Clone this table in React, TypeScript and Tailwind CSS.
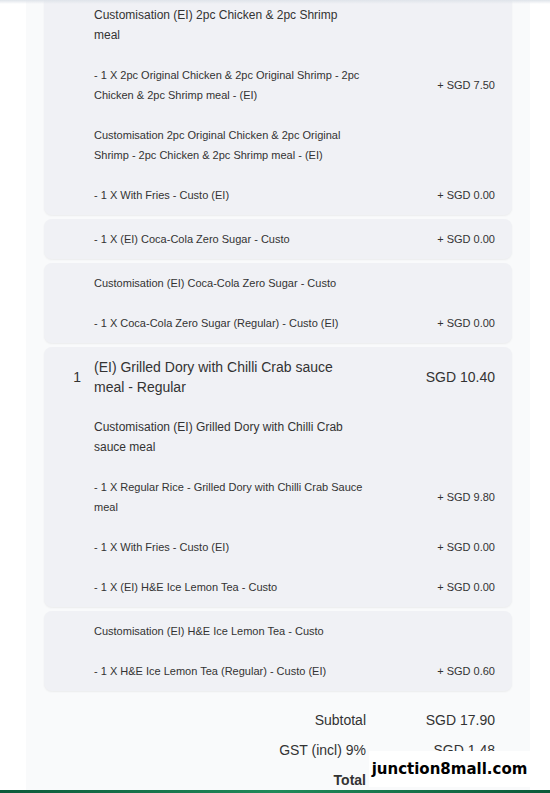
import React from "react";

type Row = { qty?: string; name: string; price?: string; title?: boolean; big?: boolean };

const cards: Row[][] = [
  [
    { name: "Customisation (EI) 2pc Chicken & 2pc Shrimp meal", big: true },
    { name: "- 1 X 2pc Original Chicken & 2pc Original Shrimp - 2pc Chicken & 2pc Shrimp meal - (EI)", price: "+ SGD 7.50" },
    { name: "Customisation 2pc Original Chicken & 2pc Original Shrimp - 2pc Chicken & 2pc Shrimp meal - (EI)" },
    { name: "- 1 X With Fries - Custo (EI)", price: "+ SGD 0.00" },
  ],
  [{ name: "- 1 X (EI) Coca-Cola Zero Sugar - Custo", price: "+ SGD 0.00" }],
  [
    { name: "Customisation (EI) Coca-Cola Zero Sugar - Custo" },
    { name: "- 1 X Coca-Cola Zero Sugar (Regular) - Custo (EI)", price: "+ SGD 0.00" },
  ],
  [
    { qty: "1", name: "(EI) Grilled Dory with Chilli Crab sauce meal - Regular", price: "SGD 10.40", title: true },
    { name: "Customisation (EI) Grilled Dory with Chilli Crab sauce meal", big: true },
    { name: "- 1 X Regular Rice - Grilled Dory with Chilli Crab Sauce meal", price: "+ SGD 9.80" },
    { name: "- 1 X With Fries - Custo (EI)", price: "+ SGD 0.00" },
    { name: "- 1 X (EI) H&E Ice Lemon Tea - Custo", price: "+ SGD 0.00" },
  ],
  [
    { name: "Customisation (EI) H&E Ice Lemon Tea - Custo" },
    { name: "- 1 X H&E Ice Lemon Tea (Regular) - Custo (EI)", price: "+ SGD 0.60" },
  ],
];

function ItemRow({ r }: { r: Row }) {
  const nameSize = r.title ? "text-[14px]" : r.big ? "text-[12px]" : "text-[11px]";
  const priceSize = r.title ? "text-[14px]" : "text-[11px]";
  return (
    <div className="flex items-center">
      <div className="w-[50px] shrink-0 pr-[13px] text-right text-[14px] leading-5 text-[#333]">{r.qty ?? ""}</div>
      <div className={`w-[270px] shrink-0 leading-5 text-[#333] ${nameSize}`}>{r.name}</div>
      <div className={`flex-1 text-right leading-5 text-[#333] ${priceSize}`}>{r.price ?? ""}</div>
    </div>
  );
}

export default function App() {
  return (
    <div
      className="relative h-[793px] w-[550px] overflow-hidden bg-white"
      style={{ fontFamily: '"Liberation Sans", Arial, sans-serif' }}
    >
      <div className="ml-[26px] h-full w-[504px] bg-[#f9fafb] px-[18px]">
        <div className="flex flex-col gap-1">
          {cards.map((rows, i) => (
            <div
              key={i}
              className={`flex flex-col gap-5 rounded-lg bg-[#f0f1f5] py-[10px] pr-[17px] shadow-[0_1px_2px_rgba(0,0,0,0.06)] ${i === 0 ? "-mt-[5px]" : ""}`}
            >
              {rows.map((r, j) => (
                <ItemRow key={j} r={r} />
              ))}
            </div>
          ))}
        </div>
        <div className="mt-[14px] flex flex-col pr-[17px] text-[14px] text-[#333]">
          <div className="flex h-[30px] items-center justify-end">
            <span>Subtotal</span>
            <span className="w-[129px] text-right">SGD 17.90</span>
          </div>
          <div className="flex h-[30px] items-center justify-end">
            <span>GST (incl) 9%</span>
            <span className="w-[129px] text-right">SGD 1.48</span>
          </div>
          <div className="flex h-[30px] items-center justify-end">
            <span className="font-bold">Total</span>
            <span className="w-[129px] text-right">SGD 17.90</span>
          </div>
        </div>
      </div>
      <div className="absolute left-0 right-0 top-0 h-[4px] bg-gradient-to-b from-[#dfe4ea] to-transparent" />
      <div
        className="absolute left-[369px] top-[751px] flex h-[36px] w-[161px] items-center justify-center bg-white text-[15px] font-bold text-black"
        style={{ fontFamily: '"DejaVu Sans", sans-serif' }}
      >
        junction8mall.com
      </div>
      <div className="absolute bottom-0 left-0 right-0 h-[3px] bg-gradient-to-r from-[#0b5a3a] via-[#1f8a5a] to-[#0b5a3a]" />
    </div>
  );
}
